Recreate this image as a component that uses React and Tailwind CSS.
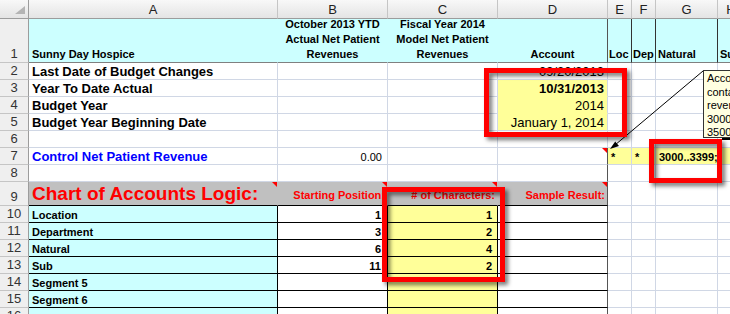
import React from "react";

// light sheet gridline on right + bottom
const G = "border-r border-b border-r-[#d0d7e5] border-b-[#d0d7e5]";
// black box borders used by the logic table
const K = "border-r border-b border-black";

function Cell({ className = "", tri, children }) {
  return (
    <div className={`relative flex overflow-hidden whitespace-nowrap ${className}`}>
      {children}
      {tri && (
        <span className="absolute right-0 top-0 h-0 w-0 border-l-[5px] border-t-[5px] border-l-transparent border-t-[#ff0000]" />
      )}
    </div>
  );
}

function RowHead({ n }) {
  return (
    <div className="flex items-end justify-center border-b border-r border-b-[#c5c5c5] border-r-[#9c9c9c] bg-[#efefef] pb-[1px] text-[13px] leading-[15px] text-[#333]">
      {n}
    </div>
  );
}

function ColHead({ children }) {
  return (
    <div className="flex items-center justify-center border-b border-r border-b-[#9c9c9c] border-r-[#c5c5c5] bg-linear-to-b from-[#f8f8f8] to-[#e4e4e4] pt-[1px] text-[13px] text-[#222]">
      {children}
    </div>
  );
}

function RedBox({ className }) {
  return (
    <div
      className={`absolute border-[5px] border-[#ff0000] drop-shadow-[3px_3px_2px_rgba(0,0,0,0.55)] ${className}`}
    />
  );
}

export default function App() {
  const label = "items-end pl-[3px] text-[13px] font-bold leading-[15px]";
  const num = "items-end justify-end pr-[3px] text-[13px] leading-[15px]";
  const hdr = "items-end pb-[1px] text-[11px] font-bold leading-[14px]";
  const seg = "items-end pl-[3px] text-[11px] font-bold leading-[14px]";
  const segNum = "items-end justify-end text-[11px] font-bold leading-[14px]";
  const redHdr = "items-end justify-end pr-[2px] pb-[3px] text-[11px] font-bold leading-[14px] text-[#ff0000]";

  const segments = [
    ["Location", "1", "1"],
    ["Department", "3", "2"],
    ["Natural", "6", "4"],
    ["Sub", "11", "2"],
    ["Segment 5", "", ""],
    ["Segment 6", "", ""],
    ["", "", ""],
  ];

  return (
    <div className="relative h-[314px] w-[730px] overflow-hidden bg-white font-['Liberation_Sans',Arial,sans-serif] text-black">
      <div className="grid grid-cols-[29px_249px_110px_110px_110px_24px_24px_62px_27px] grid-rows-[19px_44px_17px_17px_17px_17px_17px_17px_17px_24px_17px_17px_17px_17px_17px_17px_17px]">
        {/* column headers */}
        <div className="relative border-b border-r border-b-[#9c9c9c] border-r-[#9c9c9c] bg-linear-to-b from-[#f8f8f8] to-[#e4e4e4]">
          <svg className="absolute bottom-[4px] right-[3px]" width="10" height="8">
            <polygon points="10,0 10,8 0,8" fill="#b4b4b4" />
          </svg>
        </div>
        {["A", "B", "C", "D", "E", "F", "G", "H"].map((c) => (
          <ColHead key={c}>{c}</ColHead>
        ))}

        {/* row 1 */}
        <RowHead n={1} />
        <Cell className={`border-r border-b border-r-[#ccffff] border-b-[#808080] bg-[#ccffff] pl-[3px] ${hdr}`}>
          Sunny Day Hospice
        </Cell>
        <Cell className="flex-col items-center justify-end border-r border-b border-r-[#ccffff] border-b-[#808080] bg-[#ccffff] text-center text-[11px] font-bold leading-[15px]">
          <span>October 2013 YTD</span>
          <span>Actual Net Patient</span>
          <span>Revenues</span>
        </Cell>
        <Cell className="flex-col items-center justify-end border-r border-b border-r-[#ccffff] border-b-[#808080] bg-[#ccffff] text-center text-[11px] font-bold leading-[15px]">
          <span>Fiscal Year 2014</span>
          <span>Model Net Patient</span>
          <span>Revenues</span>
        </Cell>
        <Cell className={`justify-center border-r border-b border-r-[#555] border-b-[#808080] bg-[#ccffff] ${hdr}`}>
          Account
        </Cell>
        <Cell className={`border-r border-b border-r-[#333] border-b-[#808080] bg-[#ccffff] pl-[1px] ${hdr}`}>
          Loc
        </Cell>
        <Cell className={`border-r border-b border-r-[#333] border-b-[#808080] bg-[#ccffff] pl-[1px] ${hdr}`}>
          Dep
        </Cell>
        <Cell className={`border-r border-b border-r-[#333] border-b-[#808080] bg-[#ccffff] pl-[2px] ${hdr}`}>
          Natural
        </Cell>
        <Cell className={`border-r border-b border-r-[#333] border-b-[#808080] bg-[#ccffff] pl-[2px] ${hdr}`}>
          Sub
        </Cell>

        {/* rows 2-6 */}
        <RowHead n={2} />
        <Cell className={`${G} ${label}`}>Last Date of Budget Changes</Cell>
        <Cell className={G} />
        <Cell className={G} />
        <Cell className={`${G} ${num}`}>09/20/2013</Cell>
        <Cell className={G} />
        <Cell className={G} />
        <Cell className={G} />
        <Cell className={G} />

        <RowHead n={3} />
        <Cell className={`${G} ${label}`}>Year To Date Actual</Cell>
        <Cell className={G} />
        <Cell className={G} />
        <Cell className={`border-r border-b border-r-[#d0d7e5] border-b-[#ffff99] bg-[#ffff99] font-bold ${num}`}>
          10/31/2013
        </Cell>
        <Cell className={G} />
        <Cell className={G} />
        <Cell className={G} />
        <Cell className={G} />

        <RowHead n={4} />
        <Cell className={`${G} ${label}`}>Budget Year</Cell>
        <Cell className={G} />
        <Cell className={G} />
        <Cell className={`border-r border-b border-r-[#d0d7e5] border-b-[#ffff99] bg-[#ffff99] ${num}`}>2014</Cell>
        <Cell className={G} />
        <Cell className={G} />
        <Cell className={G} />
        <Cell className={G} />

        <RowHead n={5} />
        <Cell className={`${G} ${label}`}>Budget Year Beginning Date</Cell>
        <Cell className={G} />
        <Cell className={G} />
        <Cell className={`${G} bg-[#ffff99] ${num}`}>January 1, 2014</Cell>
        <Cell className={G} />
        <Cell className={G} />
        <Cell className={G} />
        <Cell className={G} />

        <RowHead n={6} />
        <Cell className={G} />
        <Cell className={G} />
        <Cell className={G} />
        <Cell className={G} />
        <Cell className={G} />
        <Cell className={G} />
        <Cell className={G} />
        <Cell className={G} />

        {/* row 7 */}
        <RowHead n={7} />
        <Cell className={`${G} ${label} text-[#0000ff]`}>Control Net Patient Revenue</Cell>
        <Cell className={`${G} items-end justify-end pr-[5px] text-[11px] leading-[14px]`}>0.00</Cell>
        <Cell className={G} />
        <Cell className="border-r border-b border-r-[#555] border-b-[#d0d7e5]" tri />
        <Cell className={`${G} bg-[#ffff99] ${seg}`}>*</Cell>
        <Cell className={`${G} bg-[#ffff99] ${seg}`}>*</Cell>
        <Cell className={`${G} bg-[#ffff99] ${seg}`}>3000..3399;</Cell>
        <Cell className={`${G} bg-[#ffff99]`} />

        {/* row 8 */}
        <RowHead n={8} />
        <Cell className={G} />
        <Cell className={G} />
        <Cell className={G} />
        <Cell className="border-r border-b border-r-[#555] border-b-[#d0d7e5]" />
        <Cell className={G} />
        <Cell className={G} />
        <Cell className={G} />
        <Cell className={G} />

        {/* row 9 */}
        <RowHead n={9} />
        <Cell
          className="items-end border-r border-b border-r-[#c0c0c0] border-b-black bg-[#c0c0c0] pl-[3px] text-[19px] font-bold leading-[22px] text-[#ff0000]"
          tri
        >
          Chart of Accounts Logic:
        </Cell>
        <Cell className={`border-r border-b border-r-[#c0c0c0] border-b-black bg-[#c0c0c0] ${redHdr}`} tri>
          Starting Position:
        </Cell>
        <Cell className={`border-r border-b border-r-[#c0c0c0] border-b-black bg-[#c0c0c0] ${redHdr}`} tri>
          # of Characters:
        </Cell>
        <Cell className={`border-r border-b border-r-[#555] border-b-black bg-[#c0c0c0] ${redHdr}`} tri>
          Sample Result:
        </Cell>
        <Cell className={G} />
        <Cell className={G} />
        <Cell className={G} />
        <Cell className={G} />

        {/* rows 10-16 */}
        {segments.map(([name, start, len], i) => (
          <React.Fragment key={i}>
            <RowHead n={10 + i} />
            <Cell className={`${K} bg-[#ccffff] ${seg}`}>{name}</Cell>
            <Cell className={`${K} pr-[6px] ${segNum}`}>{start}</Cell>
            <Cell className={`${K} bg-[#ffff99] pr-[5px] ${segNum}`}>{len}</Cell>
            <Cell className="border-r border-b border-r-[#555] border-b-black" />
            <Cell className={G} />
            <Cell className={G} />
            <Cell className={G} />
            <Cell className={G} />
          </React.Fragment>
        ))}
      </div>

      {/* comment note + arrow */}
      <div className="absolute left-[703px] top-[70px] h-[68px] w-[80px] border border-[#333] bg-[#ffffe1] px-[3px] pt-[1px] text-[11px] leading-[13.5px]">
        <div>Accounts</div>
        <div>containing</div>
        <div>revenue:</div>
        <div>3000..3399;</div>
        <div>3500..3599</div>
      </div>
      <div className="absolute left-[722px] top-[138px] h-[2px] w-[8px] bg-black" />
      <svg className="pointer-events-none absolute left-0 top-0" width="730" height="314">
        <line x1="703" y1="71" x2="615" y2="145" stroke="#000" strokeWidth="1" />
        <polygon points="610,149 619,146.1 615.2,141.5" fill="#000" />
      </svg>

      {/* highlight boxes */}
      <RedBox className="left-[484px] top-[68px] h-[69px] w-[143px]" />
      <RedBox className="left-[649px] top-[139px] h-[44px] w-[73px]" />
      <RedBox className="left-[382px] top-[187px] h-[95px] w-[123px]" />
    </div>
  );
}
